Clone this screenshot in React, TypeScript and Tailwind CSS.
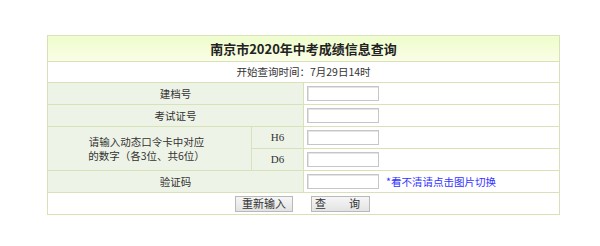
import React from "react";

const cjk = "font-['SimSun','Noto_Sans_CJK_SC',sans-serif]";

const Field = () => (
  <input
    type="text"
    className="block h-[15px] w-[72px] border border-[#c6c6c6] bg-white shadow-[inset_1px_1px_0_#e4e4e4] outline-none"
  />
);

const App = () => {
  const cell = "border border-[#d9e1b6]";
  const label = `${cell} bg-[#eef3e7] text-center`;

  return (
    <div className={`min-h-[246px] bg-white pt-[35px] pl-[47px] text-[10.5px] text-[#333] ${cjk}`}>
      <table className="w-[512px] table-fixed border-collapse">
        <colgroup>
          <col className="w-[204px]" />
          <col className="w-[52px]" />
          <col className="w-[256px]" />
        </colgroup>
        <tbody>
          <tr className="h-[26px]">
            <td
              colSpan={3}
              className={`${cell} bg-gradient-to-b from-[#edfdca] to-[#fbfde8] text-center text-[13px] font-bold text-[#222]`}
            >
              南京市2020年中考成绩信息查询
            </td>
          </tr>
          <tr className="h-[21px]">
            <td colSpan={3} className={`${cell} text-center`}>
              开始查询时间：7月29日14时
            </td>
          </tr>
          <tr className="h-[22px]">
            <td colSpan={2} className={label}>
              建档号
            </td>
            <td className={`${cell} pl-[3px]`}>
              <Field />
            </td>
          </tr>
          <tr className="h-[22px]">
            <td colSpan={2} className={label}>
              考试证号
            </td>
            <td className={`${cell} pl-[3px]`}>
              <Field />
            </td>
          </tr>
          <tr className="h-[22px]">
            <td rowSpan={2} className={`${label} pr-[6px] leading-[14px]`}>
              请输入动态口令卡中对应
              <br />
              的数字（各3位、共6位）
            </td>
            <td className={`${label} font-['Liberation_Serif',serif] text-[11px]`}>H6</td>
            <td className={`${cell} pl-[3px]`}>
              <Field />
            </td>
          </tr>
          <tr className="h-[22px]">
            <td className={`${label} font-['Liberation_Serif',serif] text-[11px]`}>D6</td>
            <td className={`${cell} pl-[3px]`}>
              <Field />
            </td>
          </tr>
          <tr className="h-[22px]">
            <td colSpan={2} className={label}>
              验证码
            </td>
            <td className={`${cell} pl-[3px]`}>
              <div className="flex items-center gap-[7px]">
                <Field />
                <span className="text-[#3333ff]">*看不清请点击图片切换</span>
              </div>
            </td>
          </tr>
          <tr className="h-[22px]">
            <td colSpan={3} className={cell}>
              <div className="flex items-center justify-center gap-[18px] pr-[2px]">
                <button className="h-[16px] w-[58px] border border-[#b9b9b9] bg-gradient-to-b from-[#f6f6f6] to-[#e3e3e3] text-[11px] leading-none text-[#333]">
                  重新输入
                </button>
                <button className="h-[16px] w-[59px] border border-[#b9b9b9] bg-gradient-to-b from-[#f6f6f6] to-[#e3e3e3] text-[11px] leading-none tracking-[6px] text-[#333]">
                  查　询
                </button>
              </div>
            </td>
          </tr>
        </tbody>
      </table>
    </div>
  );
};

export default App;
